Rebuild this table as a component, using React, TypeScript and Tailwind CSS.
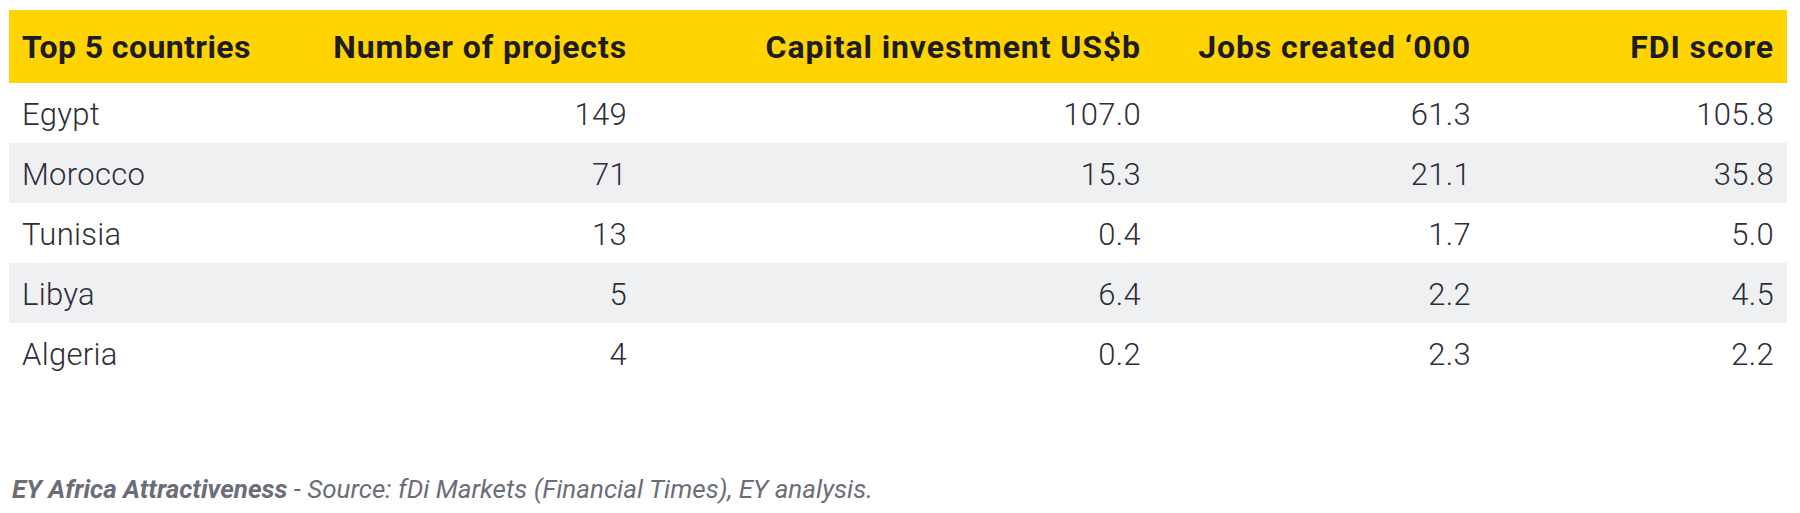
import React from "react";

const rows = [
  ["Egypt", "149", "107.0", "61.3", "105.8"],
  ["Morocco", "71", "15.3", "21.1", "35.8"],
  ["Tunisia", "13", "0.4", "1.7", "5.0"],
  ["Libya", "5", "6.4", "2.2", "4.5"],
  ["Algeria", "4", "0.2", "2.3", "2.2"],
];

const cols = "grid grid-cols-[260px_345px_514px_330px_1fr] pl-[13px] pr-[13px] whitespace-nowrap";

export default function App() {
  return (
    <div className="w-[1800px] h-[513px] bg-white font-['Roboto',sans-serif] pt-[10px]">
      <div className="ml-[9px] w-[1778px]">
        <div className={`${cols} h-[73px] items-center bg-[#ffd400] text-[#1c1c22] font-bold text-[32px] tracking-[0.9px]`}>
          <div className="tracking-[0.4px]">Top 5 countries</div>
          <div className="text-right">Number of projects</div>
          <div className="text-right">Capital investment US$b</div>
          <div className="text-right">Jobs created ‘000</div>
          <div className="text-right">FDI score</div>
        </div>
        {rows.map((r, i) => (
          <div
            key={r[0]}
            className={`${cols} h-[60px] items-center pt-[4px] text-[31px] font-light text-[#2e2e38] tracking-[0.3px] ${i % 2 === 1 ? "bg-[#eff0f2]" : "bg-white"}`}
          >
            <div>{r[0]}</div>
            <div className="text-right">{r[1]}</div>
            <div className="text-right">{r[2]}</div>
            <div className="text-right">{r[3]}</div>
            <div className="text-right">{r[4]}</div>
          </div>
        ))}
      </div>
      <div className="mt-[93px] ml-[12px] text-[26px] italic text-[#6b6e78] leading-none">
        <span className="font-bold">EY Africa Attractiveness</span>
        <span> - Source: fDi Markets (Financial Times), EY analysis.</span>
      </div>
    </div>
  );
}
